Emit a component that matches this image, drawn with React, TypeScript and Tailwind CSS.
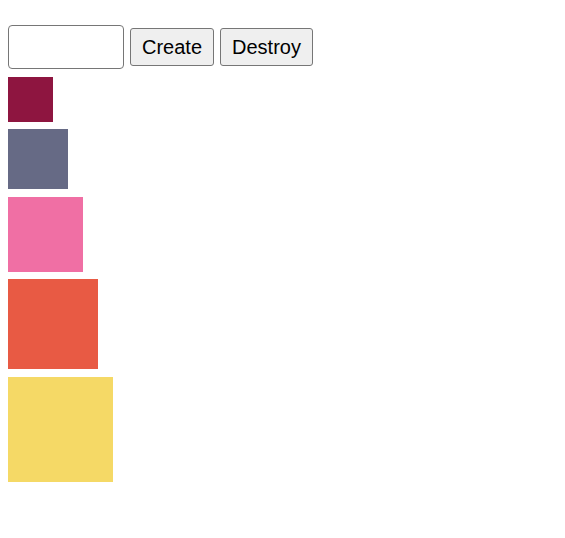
import { useState } from "react";

const COLORS = ["#8e1540", "#666a85", "#f06fa4", "#e85a44", "#f5d966"];

function App() {
  const [count, setCount] = useState("");

  return (
    <div className="flex flex-col gap-[7.5px] pl-2 pt-[25px] font-['Liberation_Sans',Arial,sans-serif]">
      <div className="flex items-center gap-1.5">
        <input
          className="w-[116px] h-[44px] rounded-[4px] border border-[#767676] bg-white px-2 text-xl outline-none"
          value={count}
          onChange={(e) => setCount(e.target.value)}
        />
        <button className="w-[84px] h-[38px] rounded-[3px] border border-[#767676] bg-[#efefef] text-[20px] text-black">
          Create
        </button>
        <button className="w-[93px] h-[38px] rounded-[3px] border border-[#767676] bg-[#efefef] text-[20px] text-black">
          Destroy
        </button>
      </div>
      {COLORS.map((color, i) => (
        <div
          key={color}
          style={{ backgroundColor: color, width: 45 + i * 15, height: 45 + i * 15 }}
        />
      ))}
    </div>
  );
}

export default App;
